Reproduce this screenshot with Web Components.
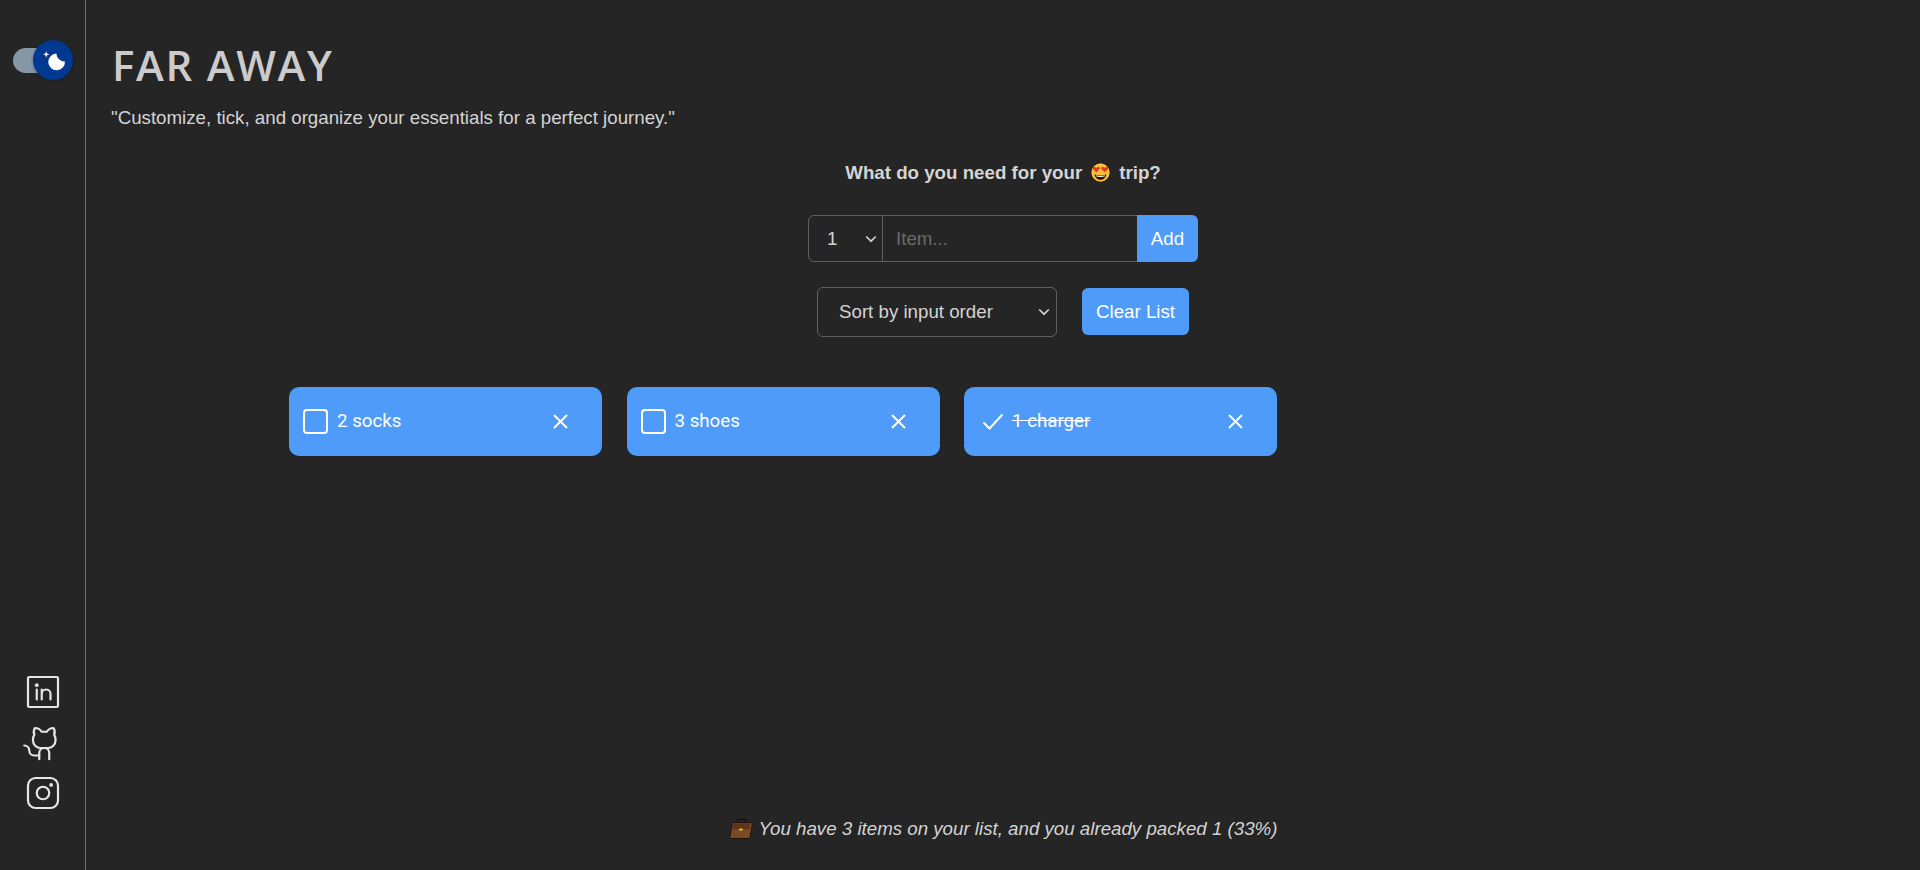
<!DOCTYPE html>
<html lang="en">
<head>
<meta charset="utf-8">
<title>Far Away</title>
<style>
    html, body { margin: 0; height: 100%; background: #252525; overflow: hidden; }
    body { font-family: "Liberation Sans", Arial, sans-serif; font-size: 18.72px; color: #d4d4d4; }
</style>
</head>
<body>
<far-away-app>
    <app-sidebar slot="sidebar"></app-sidebar>
    <app-header></app-header>
    <add-form></add-form>
    <list-controls></list-controls>
    <packing-list>
        <packing-item label="2 socks"></packing-item>
        <packing-item label="3 shoes"></packing-item>
        <packing-item label="1 charger" packed></packing-item>
    </packing-list>
    <packing-stats slot="footer"></packing-stats>
</far-away-app>

<script>
// native select arrow is too small here, so draw the chevron ourselves
const CHEVRON = `url("data:image/svg+xml,%3Csvg xmlns='http://www.w3.org/2000/svg' viewBox='0 0 12 8'%3E%3Cpath d='M1.2 1.5 6 6.2l4.8-4.7' fill='none' stroke='%23cfcfcf' stroke-width='1.7'/%3E%3C/svg%3E")`;

/**
 * Small helper, every element below only differs by its template
 */
class ShadowElement extends HTMLElement {
    constructor() {
        super();
        this.attachShadow({ mode: 'open' });
    }

    connectedCallback() {
        this.shadowRoot.innerHTML = this.template();
    }
}

class FarAwayApp extends ShadowElement {
    template() {
        return `
            <style>
                :host { display: flex; height: 870px; }
                main {
                    flex: 1;
                    min-width: 0;
                    display: flex;
                    flex-direction: column;
                }
                footer { margin-top: auto; padding-bottom: 31px; }
            </style>
            <slot name="sidebar"></slot>
            <main>
                <slot></slot>
                <footer><slot name="footer"></slot></footer>
            </main>
        `;
    }
}

class ThemeToggle extends ShadowElement {
    template() {
        return `
            <style>
                :host { display: block; position: relative; width: 60px; height: 40px; }
                .track {
                    position: absolute;
                    left: 0;
                    top: 8px;
                    width: 40px;
                    height: 25px;
                    border-radius: 13px;
                    background: #8796a5;
                }
                .thumb {
                    position: absolute;
                    left: 20px;
                    top: 0;
                    width: 40px;
                    height: 40px;
                    border-radius: 50%;
                    background: #003892;
                    display: flex;
                    align-items: center;
                    justify-content: center;
                    box-shadow: 0 1px 3px rgba(0, 0, 0, .3);
                }
                svg { width: 25px; height: 25px; fill: #fff; }
            </style>
            <div class="track"></div>
            <div class="thumb">
                <svg viewBox="0 0 20 20"><path d="M4.2 2.5l-.7 1.8-1.8.7 1.8.7.7 1.8.6-1.8L6.7 5l-1.9-.7-.6-1.8zm15 8.3a6.7 6.7 0 11-6.9-6.4 6.7 6.7 0 006.9 6.4z"/></svg>
            </div>
        `;
    }
}

class AppSidebar extends ShadowElement {
    template() {
        return `
            <style>
                :host {
                    display: flex;
                    flex-direction: column;
                    justify-content: space-between;
                    align-items: flex-start;
                    box-sizing: border-box;
                    width: 86px;
                    height: 870px;
                    flex: none;
                    padding: 40px 0 57px 13px;
                    border-right: 1px solid #6e6e6e;
                }
                .links { display: flex; flex-direction: column; gap: 10.5px; margin-left: 10px; }
                svg {
                    display: block;
                    width: 40px;
                    height: 40px;
                    fill: none;
                    stroke: #e6e6e6;
                    stroke-width: 14;
                    stroke-linecap: round;
                    stroke-linejoin: round;
                }
                .dot { fill: #e6e6e6; stroke: none; }
            </style>
            <theme-toggle></theme-toggle>
            <div class="links">
                <svg viewBox="0 0 256 256">
                    <rect x="32" y="32" width="192" height="192" rx="8"/>
                    <path d="M120 112v64M88 112v64M120 140a28 28 0 0 1 56 0v36"/>
                    <circle class="dot" cx="88" cy="84" r="12"/>
                </svg>
                <svg viewBox="0 0 256 256">
                    <path d="M119.83 56A52 52 0 0 0 76 32a51.92 51.92 0 0 0-3.49 44.7A49.28 49.28 0 0 0 64 104v8a48 48 0 0 0 48 48h48a48 48 0 0 0 48-48v-8a49.28 49.28 0 0 0-8.51-27.3A51.92 51.92 0 0 0 196 32a52 52 0 0 0-43.83 24Z"/>
                    <path d="M104 232v-40a32 32 0 0 1 32-32a32 32 0 0 1 32 32v40"/>
                    <path d="M104 208H72a32 32 0 0 1-32-32a32 32 0 0 0-32-32"/>
                </svg>
                <svg viewBox="0 0 256 256">
                    <rect x="32" y="32" width="192" height="192" rx="48"/>
                    <circle cx="128" cy="128" r="40"/>
                    <circle class="dot" cx="180" cy="76" r="12"/>
                </svg>
            </div>
        `;
    }
}

class AppHeader extends ShadowElement {
    template() {
        return `
            <style>
                :host { display: block; padding: 40px 0 0 26px; color: #d4d4d4; }
                h1 {
                    margin: 0;
                    font: 600 42px/50px "Open Sans", sans-serif;
                    letter-spacing: 1.7px;
                    color: #cccccc;
                }
                p { margin: 17px 0 0 -1px; font-size: 18.72px; line-height: 21px; }
            </style>
            <h1>FAR AWAY</h1>
            <p>"Customize, tick, and organize your essentials for a perfect journey."</p>
        `;
    }
}

class AddForm extends ShadowElement {
    template() {
        return `
            <style>
                :host { display: flex; flex-direction: column; align-items: center; padding-top: 34px; }
                h3 {
                    display: flex;
                    align-items: center;
                    gap: 8px;
                    margin: 0;
                    font-size: 18.72px;
                    line-height: 21px;
                    font-weight: 700;
                    color: #d4d4d4;
                }
                h3 svg { width: 21px; height: 21px; }
                form {
                    display: flex;
                    width: 390px;
                    height: 47px;
                    margin-top: 32px;
                }
                select, input, button { font: 18.72px "Liberation Sans", Arial, sans-serif; box-sizing: border-box; }
                select {
                    appearance: none;
                    width: 75px;
                    padding-left: 18px;
                    background: ${CHEVRON} no-repeat right 5px center / 12px 8px;
                    color: #d4d4d4;
                    border: 1px solid #5f5f5f;
                    border-radius: 6px 0 0 6px;
                }
                input {
                    flex: 1;
                    min-width: 0;
                    margin-left: -1px;
                    padding: 0 13px;
                    background: transparent;
                    color: #d4d4d4;
                    border: 1px solid #5f5f5f;
                    border-right: 0;
                }
                input::placeholder { color: #6b6b6b; opacity: 1; }
                button {
                    width: 61px;
                    padding: 0;
                    background: #4f9bf9;
                    color: #fff;
                    border: 0;
                    border-radius: 0 6px 6px 0;
                }
            </style>
            <h3>
                <span>What do you need for your</span>
                <svg viewBox="0 0 21 21" role="img" aria-label="smiling face with heart eyes">
                    <circle cx="10.5" cy="10.5" r="9.8" fill="#fbbf3c" stroke="#1a1a1a" stroke-width="1.2"/>
                    <path d="M4.6 12.2c1.8.8 3.8 1.1 5.9 1.1s4.1-.3 5.9-1.1c-.3 3.5-2.8 5.6-5.9 5.6s-5.6-2.1-5.9-5.6z" fill="#2a1608"/>
                    <path d="M6 13.2c1.4.4 3 .6 4.5.6s3.1-.2 4.5-.6l-.3 1.3c-1.3.3-2.8.4-4.2.4s-2.9-.1-4.2-.4z" fill="#fff"/>
                    <path d="M6.3 10.3 3.1 7.2c-1.3-1.5.9-3.5 2.3-2l.9.9.9-.9c1.4-1.5 3.6.5 2.3 2zM14.7 10.3l-3.2-3.1c-1.3-1.5.9-3.5 2.3-2l.9.9.9-.9c1.4-1.5 3.6.5 2.3 2z" fill="#e8352b"/>
                </svg>
                <span>trip?</span>
            </h3>
            <form>
                <select><option>1</option><option>2</option><option>3</option></select>
                <input type="text" placeholder="Item...">
                <button type="button">Add</button>
            </form>
        `;
    }
}

class ListControls extends ShadowElement {
    template() {
        return `
            <style>
                :host {
                    display: flex;
                    justify-content: center;
                    align-items: flex-start;
                    gap: 25px;
                    padding-top: 25px;
                }
                select, button { font: 18.72px "Liberation Sans", Arial, sans-serif; box-sizing: border-box; }
                select {
                    appearance: none;
                    width: 240px;
                    height: 50px;
                    padding: 0 0 2px 21px;
                    background: ${CHEVRON} no-repeat right 6px center / 12px 8px;
                    color: #d4d4d4;
                    border: 1px solid #5f5f5f;
                    border-radius: 6px;
                }
                button {
                    width: 107px;
                    height: 47px;
                    margin-top: 1px;
                    padding: 0;
                    background: #4f9bf9;
                    color: #fff;
                    border: 0;
                    border-radius: 6px;
                }
            </style>
            <select>
                <option>Sort by input order</option>
                <option>Sort by description</option>
                <option>Sort by packed status</option>
            </select>
            <button type="button">Clear List</button>
        `;
    }
}

class PackingList extends ShadowElement {
    template() {
        return `
            <style>
                :host {
                    display: grid;
                    grid-template-columns: repeat(4, 313px);
                    gap: 24.5px;
                    padding: 50px 0 0 203px;
                }
            </style>
            <slot></slot>
        `;
    }
}

class PackingItem extends ShadowElement {
    template() {
        const packed = this.hasAttribute('packed');
        const box = packed
            ? `<svg class="box" viewBox="0 0 25 25"><path d="M5.5 13.5l6 6L24.5 5.5"/></svg>`
            : `<svg class="box" viewBox="0 0 25 25"><rect x="1" y="1" width="23" height="23" rx="3"/></svg>`;
        return `
            <style>
                :host {
                    display: flex;
                    align-items: center;
                    height: 69px;
                    padding: 0 0 0 14px;
                    box-sizing: border-box;
                    border-radius: 10px;
                    background: #4f9bf9;
                    color: #fff;
                    font: 18.72px Roboto, sans-serif;
                }
                svg { flex: none; fill: none; stroke: #fff; stroke-width: 2; }
                .box { width: 25px; height: 25px; }
                span { margin: 0 0 2px 9px; flex: 1; }
                :host([packed]) span { text-decoration: line-through; }
                .close { width: 15px; height: 15px; margin-right: 34px; }
            </style>
            ${box}
            <span>${this.getAttribute('label')}</span>
            <svg class="close" viewBox="0 0 15 15"><path d="M1 1l13 13M14 1L1 14"/></svg>
        `;
    }
}

class PackingStats extends ShadowElement {
    template() {
        return `
            <style>
                :host {
                    display: flex;
                    justify-content: center;
                    align-items: center;
                    gap: 6px;
                    font-size: 18.72px;
                    font-style: italic;
                    line-height: 21px;
                    color: #d4d4d4;
                }
                svg { width: 24px; height: 21px; }
            </style>
            <svg viewBox="0 0 24 21" role="img" aria-label="briefcase">
                <path d="M8.5 5V2.5c0-.8.6-1.3 1.3-1.3h5.6c.8 0 1.3.6 1.3 1.3V5" fill="none" stroke="#1c120a" stroke-width="1.6"/>
                <path d="M4.4 4.6h17.4c1 0 1.7.9 1.5 1.9l-2.2 12.4c-.2.9-1 1.6-1.9 1.6H2.3c-1 0-1.7-.9-1.5-1.9L3 6c.1-.8.7-1.4 1.4-1.4z" fill="#7a4a26" stroke="#1c120a" stroke-width="1"/>
                <path d="M3.6 5.6h17.7l-1 5.6H2.6z" fill="#5e3519"/>
                <rect x="10" y="10.6" width="3.8" height="1.8" fill="#f5b81f"/>
            </svg>
            <span>You have 3 items on your list, and you already packed 1 (33%)</span>
        `;
    }
}

customElements.define('far-away-app', FarAwayApp);
customElements.define('theme-toggle', ThemeToggle);
customElements.define('app-sidebar', AppSidebar);
customElements.define('app-header', AppHeader);
customElements.define('add-form', AddForm);
customElements.define('list-controls', ListControls);
customElements.define('packing-list', PackingList);
customElements.define('packing-item', PackingItem);
customElements.define('packing-stats', PackingStats);
</script>
</body>
</html>
